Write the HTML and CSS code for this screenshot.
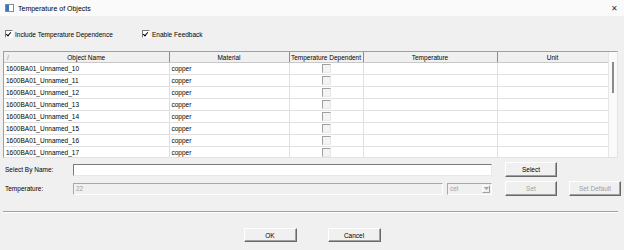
FILE: index.html
```html
<!DOCTYPE html>
<html>
<head>
    <meta charset="UTF-8">
    <title>Temperature of Objects</title>
    <link rel="stylesheet" href="styles.css">
</head>
<body>
    <div class="titlebar">
        <svg class="app-icon" width="9" height="8" viewBox="0 0 9 8">
            <rect x="0.5" y="0.5" width="8" height="7" fill="#fff" stroke="#7a8da3"/>
            <rect x="1" y="1" width="3" height="6" fill="#3b6fb6"/>
        </svg>
        <div class="title">Temperature of Objects</div>
        <div class="close">&#x2715;</div>
    </div>

    <div class="options">
        <label class="check-item"><span class="check on"></span>Include Temperature Dependence</label>
        <label class="check-item"><span class="check on"></span>Enable Feedback</label>
    </div>

    <div class="grid-box">
        <div class="grid-view">
            <table class="grid">
                <colgroup>
                    <col style="width:165px">
                    <col style="width:120px">
                    <col style="width:74px">
                    <col style="width:134px">
                    <col style="width:111px">
                </colgroup>
                <thead>
                    <tr>
                        <th class="sort-col"><span class="sort">/</span>Object Name</th>
                        <th>Material</th>
                        <th>Temperature Dependent</th>
                        <th>Temperature</th>
                        <th>Unit</th>
                    </tr>
                </thead>
                <tbody id="rows"></tbody>
            </table>
        </div>
        <div class="vscroll"><div class="thumb"></div></div>
    </div>

    <div class="form">
        <div class="form-row">
            <span class="form-label">Select By Name:</span>
            <input class="field name-field" type="text">
            <button class="btn gap-btn">Select</button>
        </div>
        <div class="form-row">
            <span class="form-label">Temperature:</span>
            <input class="field temp-field" type="text" value="22" disabled>
            <div class="combo">
                <span>cel</span>
                <span class="combo-btn">
                    <svg width="5" height="3" viewBox="0 0 5 3"><path d="M0 0H5L2.5 3Z" fill="#a0a0a0"/></svg>
                </span>
            </div>
            <button class="btn gap-btn" disabled>Set</button>
            <button class="btn default-btn" disabled>Set Default</button>
        </div>
    </div>

    <div class="separator"></div>

    <div class="footer">
        <button class="btn dlg-btn">OK</button>
        <button class="btn dlg-btn">Cancel</button>
    </div>

    <script>
        // fill the grid with the visible object rows
        var tbody = document.getElementById('rows');
        for (var i = 10; i <= 17; i++) {
            var tr = document.createElement('tr');
            tr.innerHTML = '<td>1600BA01_Unnamed_' + i + '</td>' +
                '<td>copper</td>' +
                '<td class="center"><span class="cell-check"></span></td>' +
                '<td></td><td></td>';
            tbody.appendChild(tr);
        }
    </script>
</body>
</html>
```

FILE: styles.css
```css
body {
    margin: 0;
    width: 624px;
    height: 250px;
    overflow: hidden;
    background-color: #f0f0f0;
    font-family: "Liberation Sans", Arial, sans-serif;
    font-size: 6.5px;
    color: #000;
}
.titlebar {
    display: flex;
    align-items: center;
    height: 16px;
    padding: 0 6px 0 5px;
    background-color: #fafafa;
}
.app-icon {
    margin-right: 4px;
}
.title {
    flex: 1;
    font-size: 7px;
}
.close {
    font-size: 8px;
    color: #333;
}
.options {
    display: flex;
    padding: 13px 0 0 5px;
    height: 10px;
}
.check-item {
    display: flex;
    align-items: center;
    width: 137px;
    white-space: nowrap;
}
.check {
    position: relative;
    flex-shrink: 0;
    width: 6px;
    height: 6px;
    margin-right: 2px;
    border: 1px solid;
    border-color: #7b7b7b #fff #fff #7b7b7b;
    background-color: #fff;
}
.check.on::after {
    content: "";
    position: absolute;
    left: 1px;
    top: 0px;
    width: 2px;
    height: 4px;
    border: solid #000;
    border-width: 0 1px 1px 0;
    transform: rotate(40deg);
}
.grid-box {
    display: flex;
    margin: 12px 6px 0 3px;
    height: 105px;
    border: 1px solid;
    border-color: #a0a0a0 #e3e3e3 #e3e3e3 #a0a0a0;
    background-color: #fff;
}
.grid-view {
    width: 604px;
    overflow: hidden;
}
.grid {
    border-collapse: collapse;
    table-layout: fixed;
    width: 604px;
}
.grid th {
    height: 10px;
    padding: 0;
    font-weight: normal;
    background-color: #f0f0f0;
    border-right: 1px solid #8c8c8c;
    border-bottom: 1px solid #c8c8c8;
    white-space: nowrap;
    overflow: hidden;
}
.sort-col {
    position: relative;
}
.sort {
    position: absolute;
    left: 3px;
    color: #888;
}
.grid td {
    height: 11px;
    padding: 0 0 0 2px;
    border-right: 1px solid #e0e0e0;
    border-bottom: 1px solid #e0e0e0;
    white-space: nowrap;
}
.grid td.center {
    text-align: center;
    padding: 0;
}
.cell-check {
    display: inline-block;
    width: 7px;
    height: 7px;
    vertical-align: middle;
    border: 1px solid;
    border-color: #a0a0a0 #e8e8e8 #e8e8e8 #a0a0a0;
    background-color: #f4f4f4;
}
.vscroll {
    flex: 1;
    display: flex;
    justify-content: center;
    border-left: 1px solid #e6e6e6;
    background-color: #fafafa;
}
.thumb {
    width: 2px;
    height: 31px;
    margin-top: 10px;
    background-color: #8a8a8a;
}
.form {
    display: flex;
    flex-direction: column;
    gap: 4px;
    padding: 4px 0 0 5px;
}
.form-row {
    display: flex;
    align-items: center;
    height: 15px;
}
.form-label {
    flex-shrink: 0;
    width: 68px;
    white-space: nowrap;
}
.field {
    box-sizing: border-box;
    flex-shrink: 0;
    height: 12px;
    padding: 0 2px;
    font-family: inherit;
    font-size: 6.5px;
    border: 1px solid;
    border-color: #7a7a7a #e8e8e8 #e8e8e8 #7a7a7a;
    background-color: #fff;
    outline: none;
}
.name-field {
    width: 419px;
}
.temp-field {
    width: 370px;
    background-color: #f0f0f0;
    color: #a0a0a0;
    border-color: #a8a8a8 #fff #fff #a8a8a8;
}
.combo {
    box-sizing: border-box;
    display: flex;
    align-items: center;
    justify-content: space-between;
    flex-shrink: 0;
    width: 45px;
    height: 12px;
    margin-left: 4px;
    padding: 0 1px 0 2px;
    color: #a0a0a0;
    border: 1px solid;
    border-color: #a8a8a8 #fff #fff #a8a8a8;
}
.combo-btn {
    box-sizing: border-box;
    display: flex;
    align-items: center;
    justify-content: center;
    width: 8px;
    height: 8px;
    border: 1px solid;
    border-color: #fff #a0a0a0 #a0a0a0 #fff;
}
.btn {
    box-sizing: border-box;
    flex-shrink: 0;
    width: 52px;
    height: 15px;
    padding: 0;
    font-family: inherit;
    font-size: 6.5px;
    color: #000;
    background-color: #f0f0f0;
    border: 1px solid;
    border-color: #fff #696969 #696969 #fff;
    box-shadow: inset -1px -1px 0 #a0a0a0;
}
.btn:disabled {
    color: #a0a0a0;
}
.gap-btn {
    margin-left: 13px;
}
.default-btn {
    margin-left: 12px;
}
.separator {
    margin: 15px 6px 0 3px;
    height: 0;
    border-top: 1px solid #a0a0a0;
    border-bottom: 1px solid #fff;
}
.footer {
    display: flex;
    justify-content: center;
    gap: 31px;
    padding: 15px 0 0 0;
}
.dlg-btn {
    width: 53px;
    height: 14px;
}
```
